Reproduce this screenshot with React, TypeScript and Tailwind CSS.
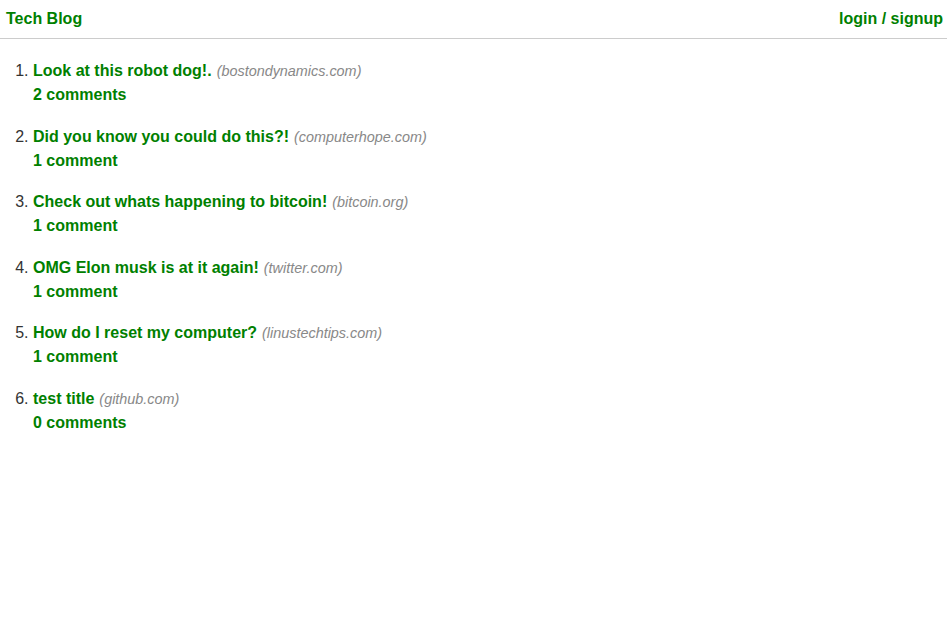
import React from 'react';

interface Post {
  id: number;
  title: string;
  domain: string;
  comments: number;
}

const posts: Post[] = [
  { id: 1, title: 'Look at this robot dog!.', domain: 'bostondynamics.com', comments: 2 },
  { id: 2, title: 'Did you know you could do this?!', domain: 'computerhope.com', comments: 1 },
  { id: 3, title: 'Check out whats happening to bitcoin!', domain: 'bitcoin.org', comments: 1 },
  { id: 4, title: 'OMG Elon musk is at it again!', domain: 'twitter.com', comments: 1 },
  { id: 5, title: 'How do I reset my computer?', domain: 'linustechtips.com', comments: 1 },
  { id: 6, title: 'test title', domain: 'github.com', comments: 0 },
];

const App = () => {
  return (
    <div className="min-h-screen bg-white font-['Liberation_Sans',Arial,sans-serif] text-[16px] text-[#333]">
      <nav className="h-[39px] flex items-center justify-between pl-[6px] pr-[4px] border-b border-[#cccccc]">
        <a href="#" className="font-bold text-[#008000]">Tech Blog</a>
        <a href="#" className="font-bold text-[#008000]">login / signup</a>
      </nav>
      <main>
        <ol className="list-decimal pl-[33px] pt-[20px]">
          {posts.map((post) => (
            <li key={post.id} className="mb-[17.6px] leading-[24px]">
              <div>
                <a href="#" className="font-bold text-[#008000]">{post.title}</a>
                <span className="italic text-[14.4px] text-[#888888] ml-[5px]">({post.domain})</span>
              </div>
              <div>
                <a href="#" className="font-bold text-[#008000]">
                  {post.comments} {post.comments === 1 ? 'comment' : 'comments'}
                </a>
              </div>
            </li>
          ))}
        </ol>
      </main>
    </div>
  );
};

export default App;
